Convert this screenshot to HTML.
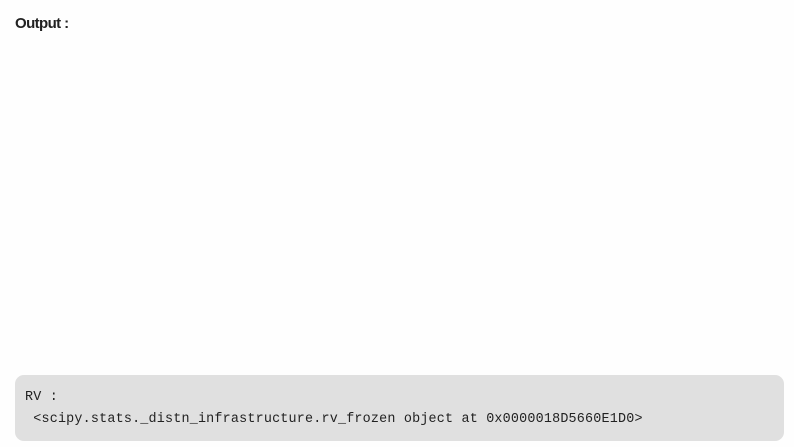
<!DOCTYPE html>
<html><head><style>
body{margin:0;background:#fefefe;width:794px;height:447px;position:relative;overflow:hidden}
.h{position:absolute;left:15px;top:15px;font:bold 15px "Liberation Sans",sans-serif;color:#222;letter-spacing:-0.6px}
.box{position:absolute;left:15px;top:375px;width:769px;height:66px;background:#e0e0e0;border-radius:9px}
pre{margin:0;position:absolute;left:10px;top:12px;font:13.4px/22px "Liberation Mono",monospace;color:#222;letter-spacing:0.2px}
</style></head><body>
<div class="h">Output :</div>
<div class="box"><pre>RV :
 &lt;scipy.stats._distn_infrastructure.rv_frozen object at 0x0000018D5660E1D0&gt;</pre></div>
</body></html>
